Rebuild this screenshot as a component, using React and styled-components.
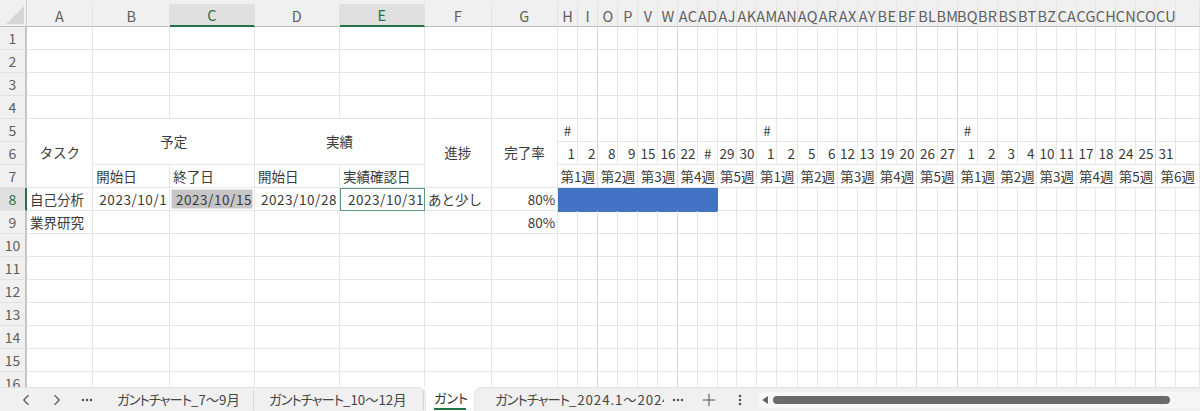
import React from "react";
import styled, { createGlobalStyle } from "styled-components";
import { ChevronLeft, ChevronRight, Plus } from "lucide-react";

const GANTT_COLS = ["H", "I", "O", "P", "V", "W", "AC", "AD", "AJ", "AK", "AM", "AN", "AQ", "AR", "AX", "AY", "BE", "BF", "BL", "BM", "BQ", "BR", "BS", "BT", "BZ", "CA", "CG", "CH", "CN", "CO", "CU", ""];
const DAYS = [1, 2, 8, 9, 15, 16, 22, "#", 29, 30, 1, 2, 5, 6, 12, 13, 19, 20, 26, 27, 1, 2, 3, 4, 10, 11, 17, 18, 24, 25, 31, ""];
const WEEKS = [1, 2, 3, 4, 5, 1, 2, 3, 4, 5, 1, 2, 3, 4, 5, 6];
const MONTH_MARKS = [0, 10, 20];
const MAJOR = [1, 5, 17, 19, 29];
const EDGES = [0, 27, 93.3, 170.3, 255, 340, 425, 491.7, 558.3, 578, 598.5, 618.5, 638.5, 658.5, 678.5, 698.5, 718, 737.5, 757.5, 777.5, 798, 818.5, 838.5, 858, 877.5, 897.5, 917.5, 938, 958, 978, 998.5, 1018, 1037.5, 1057.5, 1077, 1096.5, 1116.5, 1136.5, 1156.5, 1176.5, 1200];
const TRACK = EDGES.slice(1).map((e, i) => `${(e - EDGES[i]).toFixed(1)}px`).join(" ");
const MAIN_COLS = ["A", "B", "C", "D", "E", "F", "G"];
const SELECTED_COLS = ["C", "E"];

const GlobalStyle = createGlobalStyle`
  html, body {
    margin: 0;
    height: 100%;
    overflow: hidden;
    background: #ffffff;
  }
`;

const Window = styled.div`
  width: 1200px;
  height: 411px;
  display: flex;
  flex-direction: column;
  overflow: hidden;
  font-family: "Noto Sans CJK JP", "Noto Sans", sans-serif;
  font-size: 13.5px;
  color: #3a3a3a;
`;

const Sheet = styled.div`
  flex: 0 0 387px;
  overflow: hidden;
  display: grid;
  grid-template-columns: ${TRACK};
  grid-template-rows: 27.3px;
  grid-auto-rows: 23px;
  background: #ffffff;
`;

const Corner = styled.div`
  background: #f0f0f0;
  border-bottom: 1px solid #bdbdbd;
  border-right: 1px solid #cfcfcf;
  display: flex;
  align-items: flex-end;
  justify-content: flex-end;
  padding: 0 2px 2px 0;
`;

const ColHead = styled.div`
  display: flex;
  align-items: center;
  justify-content: center;
  overflow: hidden;
  white-space: nowrap;
  font-size: 14.5px;
  letter-spacing: 0.3px;
  border-top: 4px solid #f0f0f0;
  border-right: 1px solid #e2e2e2;
  border-bottom: ${(p) => (p.$selected ? "2px solid #217346" : "1px solid #bdbdbd")};
  background: ${(p) => (p.$selected ? "#e0e0e0" : "#f0f0f0")};
  color: ${(p) => (p.$selected ? "#217346" : "#5f5f5f")};
`;

const RowHead = styled.div`
  display: flex;
  align-items: center;
  justify-content: center;
  overflow: hidden;
  font-size: 14px;
  border-bottom: 1px solid #e2e2e2;
  border-right: ${(p) => (p.$selected ? "2px solid #217346" : "2px solid #c4c4c4")};
  background: ${(p) => (p.$selected ? "#e0e0e0" : "#f0f0f0")};
  color: ${(p) => (p.$selected ? "#217346" : "#5f5f5f")};
`;

const Cell = styled.div`
  grid-column: span ${(p) => p.$cols || 1};
  grid-row: span ${(p) => p.$rows || 1};
  display: flex;
  align-items: center;
  justify-content: ${(p) => p.$align || "flex-start"};
  padding: 0 ${(p) => (p.$align === "flex-end" ? "2px" : "0")} ${(p) => (p.$rows > 1 ? "2px" : "0")} ${(p) => (p.$align ? "0" : "3px")};
  min-width: 0;
  overflow: hidden;
  white-space: nowrap;
  box-sizing: border-box;
  border-right: 1px solid ${(p) => (p.$major ? "#d9d9d9" : "#e6e6e6")};
  border-bottom: 1px solid #e6e6e6;
`;

const DateCell = styled(Cell).attrs({ $align: "flex-end" })`
  letter-spacing: 0.55px;
`;

const SelectedDate = styled(DateCell)`
  background: #c6c6c6;
  box-shadow: inset 0 0 0 1.5px #ffffff;
`;

const ActiveDate = styled(DateCell)`
  border: 1.5px solid #5f9a78;
  padding-right: 0;
  padding-bottom: 1px;
`;

const Bar = styled.div`
  grid-column: span ${(p) => p.$cols};
  background: #4472c4;
  margin: -0.5px 0;
`;

const TabBar = styled.div`
  flex: 0 0 24px;
  height: 24px;
  display: flex;
  background: #ffffff;
  line-height: 20px;
`;

const TabGroup = styled.div`
  display: flex;
  align-items: center;
  background: #f0f0f0;
  border-top: 1px solid #e2e2e2;
  box-sizing: border-box;
`;

const LeftTabs = styled(TabGroup)`
  flex: 0 0 426px;
  border-top-right-radius: 8px;
  border-right: 1px solid #e6e6e6;
`;

const RightTabs = styled(TabGroup)`
  flex: 1;
  min-width: 0;
  border-top-left-radius: 8px;
  border-left: 1px solid #e6e6e6;
`;

const NavButton = styled.div`
  flex: 0 0 ${(p) => p.$width}px;
  display: flex;
  align-items: center;
  justify-content: center;
  color: #555555;
`;

const Tab = styled.div`
  flex: 0 0 ${(p) => p.$width}px;
  box-sizing: border-box;
  padding-left: ${(p) => p.$pad}px;
  overflow: hidden;
  white-space: nowrap;
  font-size: 13.3px;
  color: #444444;
  border-right: ${(p) => (p.$divider ? "1px solid #d4d4d4" : "none")};
`;

const Kana = styled.span`
  font-feature-settings: "palt";
  letter-spacing: -1px;
`;

const WideDigits = styled.span`
  letter-spacing: 0.9px;
`;

const ActiveTab = styled.div`
  flex: 0 0 48px;
  min-width: 0;
  box-sizing: border-box;
  padding: 0 8px;
  display: flex;
  flex-direction: column;
  align-items: center;
  justify-content: flex-end;
`;

const ActiveLabel = styled.div`
  width: 100%;
  text-align: center;
  white-space: nowrap;
  line-height: 20px;
  font-size: 13px;
  font-feature-settings: "palt";
  color: #333333;
  border-bottom: 2px solid #217346;
  margin-bottom: 1px;
`;

const ScrollTrack = styled.div`
  flex: 1;
  height: 16px;
  margin-left: 4px;
  display: flex;
  align-items: center;
  background: #f7f7f7;
  border-radius: 8px 0 0 8px;
`;

const ScrollArrow = styled.div`
  width: 0;
  height: 0;
  margin-left: 4px;
  border-top: 4px solid transparent;
  border-bottom: 4px solid transparent;
  border-right: 6px solid #666666;
`;

const ScrollThumb = styled.div`
  width: 397px;
  height: 8px;
  margin-left: 5px;
  border-radius: 4px;
  background: #6b6b6b;
`;

function Dots({ vertical }) {
  return (
    <svg width={vertical ? 4 : 12} height={vertical ? 12 : 4} viewBox={vertical ? "0 0 4 12" : "0 0 12 4"} fill="#555555">
      {[2, 6, 10].map((d) => (vertical ? <circle key={d} cx="2" cy={d} r="1.25" /> : <circle key={d} cx={d} cy="2" r="1.25" />))}
    </svg>
  );
}

function BlankRow({ count, from = 0 }) {
  return Array.from({ length: count }, (_, i) => <Cell key={i} $major={MAJOR.includes(i + from)} />);
}

function DataRows() {
  const rows = [];
  for (let r = 1; r <= 16; r++) {
    rows.push(
      <RowHead key={`h${r}`} $selected={r === 8}>
        {r}
      </RowHead>
    );
    if (r === 5) {
      rows.push(
        <React.Fragment key="r5">
          <Cell $rows={3} $align="center">タスク</Cell>
          <Cell $rows={2} $cols={2} $align="center">予定</Cell>
          <Cell $rows={2} $cols={2} $align="center">実績</Cell>
          <Cell $rows={3} $align="center">進捗</Cell>
          <Cell $rows={3} $align="center">完了率</Cell>
          {GANTT_COLS.map((_, i) => (
            <Cell key={i} $align="center" $major={MAJOR.includes(i)}>
              {MONTH_MARKS.includes(i) ? "#" : ""}
            </Cell>
          ))}
        </React.Fragment>
      );
    } else if (r === 6) {
      rows.push(
        <React.Fragment key="r6">
          {DAYS.map((d, i) => (
            <Cell key={i} $align={d === "#" ? "center" : "flex-end"} $major={MAJOR.includes(i)}>
              {d}
            </Cell>
          ))}
        </React.Fragment>
      );
    } else if (r === 7) {
      rows.push(
        <React.Fragment key="r7">
          <Cell>開始日</Cell>
          <Cell>終了日</Cell>
          <Cell>開始日</Cell>
          <Cell>実績確認日</Cell>
          {WEEKS.map((w, i) => (
            <Cell key={i} $cols={2} $align="center" $major={MAJOR.includes(i * 2 + 1)}>
              第{w}週
            </Cell>
          ))}
        </React.Fragment>
      );
    } else if (r === 8) {
      rows.push(
        <React.Fragment key="r8">
          <Cell>自己分析</Cell>
          <DateCell>2023/10/1</DateCell>
          <SelectedDate>2023/10/15</SelectedDate>
          <DateCell>2023/10/28</DateCell>
          <ActiveDate>2023/10/31</ActiveDate>
          <Cell>あと少し</Cell>
          <Cell $align="flex-end">80%</Cell>
          <Bar $cols={8} />
          <BlankRow count={24} from={8} />
        </React.Fragment>
      );
    } else if (r === 9) {
      rows.push(
        <React.Fragment key="r9">
          <Cell>業界研究</Cell>
          <BlankRow count={5} from={100} />
          <Cell $align="flex-end">80%</Cell>
          <BlankRow count={32} />
        </React.Fragment>
      );
    } else {
      rows.push(
        <React.Fragment key={`r${r}`}>
          <BlankRow count={7} from={100} />
          <BlankRow count={32} />
        </React.Fragment>
      );
    }
  }
  return rows;
}

export default function App() {
  return (
    <>
      <GlobalStyle />
      <Window>
        <Sheet>
          <Corner>
            <svg width="18" height="18" viewBox="0 0 18 18">
              <polygon points="18,0 18,18 0,18" fill="#d6d6d6" />
            </svg>
          </Corner>
          {MAIN_COLS.map((c) => (
            <ColHead key={c} $selected={SELECTED_COLS.includes(c)}>
              {c}
            </ColHead>
          ))}
          {GANTT_COLS.map((c, i) => (
            <ColHead key={i}>{c}</ColHead>
          ))}
          <DataRows />
        </Sheet>
        <TabBar>
          <LeftTabs>
            <NavButton $width={17} />
            <NavButton $width={17}>
              <ChevronLeft size={18} strokeWidth={1.5} />
            </NavButton>
            <NavButton $width={44}>
              <ChevronRight size={18} strokeWidth={1.5} />
            </NavButton>
            <NavButton $width={16}>
              <Dots />
            </NavButton>
            <Tab $width={159} $pad={22} $divider><Kana>ガントチャート</Kana>_7～9月</Tab>
            <Tab $width={170} $pad={15} $divider><Kana>ガントチャート</Kana>_10～12月</Tab>
          </LeftTabs>
          <ActiveTab>
            <ActiveLabel>ガント</ActiveLabel>
          </ActiveTab>
          <RightTabs>
            <Tab $width={189} $pad={20}><Kana>ガントチャート</Kana><WideDigits>_2024.1～2024.3月</WideDigits></Tab>
            <NavButton $width={28}>
              <Dots />
            </NavButton>
            <NavButton $width={34}>
              <Plus size={20} strokeWidth={1.25} />
            </NavButton>
            <NavButton $width={28}>
              <Dots vertical />
            </NavButton>
            <ScrollTrack>
              <ScrollArrow />
              <ScrollThumb />
            </ScrollTrack>
          </RightTabs>
        </TabBar>
      </Window>
    </>
  );
}
